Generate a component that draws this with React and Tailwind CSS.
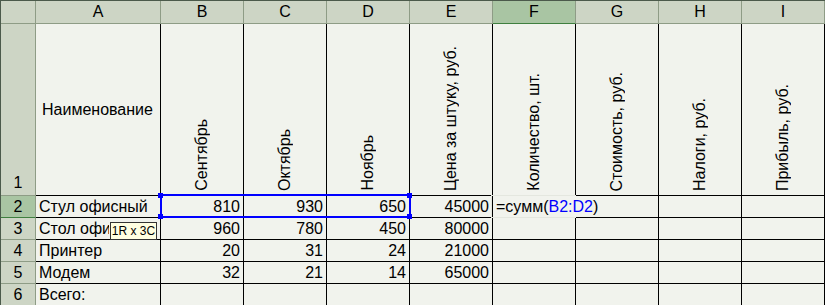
import React from "react";

const COLS = ["A", "B", "C", "D", "E", "F", "G", "H", "I"];

const TITLES = [
  "Сентябрь",
  "Октябрь",
  "Ноябрь",
  "Цена за штуку, руб.",
  "Количество, шт.",
  "Стоимость, руб.",
  "Налоги, руб.",
  "Прибыль, руб.",
];

const ROWS = [
  ["Стул офисный", 810, 930, 650, 45000],
  ["Стол офисный", 960, 780, 450, 80000],
  ["Принтер", 20, 31, 24, 21000],
  ["Модем", 32, 21, 14, 65000],
  ["Всего:"],
];

const headCell = "bg-[#cdd5c5] border-r border-b border-[#8e9c86]";
const activeHead = "bg-[#a9c5a3] border-r border-b border-r-[#8e9c86] border-b-[#3f7f3f]";
const cell = "bg-[#f1f3ed] border-r border-b border-black overflow-hidden whitespace-nowrap";

const Handle = ({ className }) => (
  <div className={`absolute w-[5px] h-[5px] bg-[#0000ff] ${className}`} />
);

export default function App() {
  return (
    <div
      className="relative w-[825px] h-[305px] overflow-hidden bg-[#f1f3ed] text-[16px] text-black"
      style={{ fontFamily: '"Liberation Sans", Arial, sans-serif' }}
    >
      <div className="grid grid-cols-[35px_125px_repeat(8,83px)] grid-rows-[23px_172px_repeat(5,22px)] border-l border-t border-[#4b5a4b] w-[825px]">
        {/* column letters */}
        <div className={headCell} />
        {COLS.map((c) => (
          <div
            key={c}
            className={`${c === "F" ? activeHead : headCell} flex items-center justify-center leading-none`}
          >
            {c}
          </div>
        ))}

        {/* row 1: titles */}
        <div className={`${headCell} flex items-end justify-center pb-[3px] leading-[18px]`}>1</div>
        <div className={`${cell} flex items-center pl-[6px] pt-[1px]`}>Наименование</div>
        {TITLES.map((t) => (
          <div key={t} className={`${cell} flex items-end justify-center pb-[4px]`}>
            <span className="[writing-mode:vertical-rl] rotate-180 leading-[18px]">{t}</span>
          </div>
        ))}

        {/* data rows */}
        {ROWS.map((r, i) => (
          <React.Fragment key={i}>
            <div
              className={`${i === 0 ? activeHead : headCell} flex items-end justify-center leading-[18px] pb-px`}
            >
              {i + 2}
            </div>
            <div className={`${cell} flex items-end pl-[3px] leading-[18px] pb-px`}>
              {/* the size hint sits over the rest of A3 */}
              <span className={i === 1 ? "max-w-[70px] overflow-hidden" : ""}>{r[0]}</span>
            </div>
            {[1, 2, 3, 4].map((j) => (
              <div key={j} className={`${cell} flex items-end justify-end pr-[3px] leading-[18px] pb-px`}>
                {r[j] ?? ""}
              </div>
            ))}
            {[5, 6, 7, 8].map((j) => (
              <div key={j} className={cell} />
            ))}
          </React.Fragment>
        ))}
      </div>

      {/* selected range B2:D2 */}
      <div className="absolute left-[160px] top-[194px] w-[251px] h-[24px] border-2 border-[#0000ff]" />
      <Handle className="left-[158px] top-[193px]" />
      <Handle className="left-[407px] top-[193px]" />
      <Handle className="left-[158px] top-[214px]" />
      <Handle className="left-[407px] top-[214px]" />

      {/* cell being edited: F2 */}
      <div className="absolute left-[491px] top-[195px] w-[85px] h-[23px] border border-[#e4e7df]" />
      <div className="absolute left-[493px] top-[196px] h-[21px] pl-[3px] pr-[4px] bg-[#f1f3ed] flex items-end leading-[18px] pb-px whitespace-nowrap">
        =сумм(<span className="text-[#0000ff]">B2:D2</span>)
      </div>

      {/* size hint */}
      <div className="absolute left-[110px] top-[222px] w-[47px] h-[18px] bg-[#ffffe1] border border-[#333] text-[12px] leading-none flex items-center justify-center whitespace-nowrap">
        1R x 3C
      </div>
    </div>
  );
}
